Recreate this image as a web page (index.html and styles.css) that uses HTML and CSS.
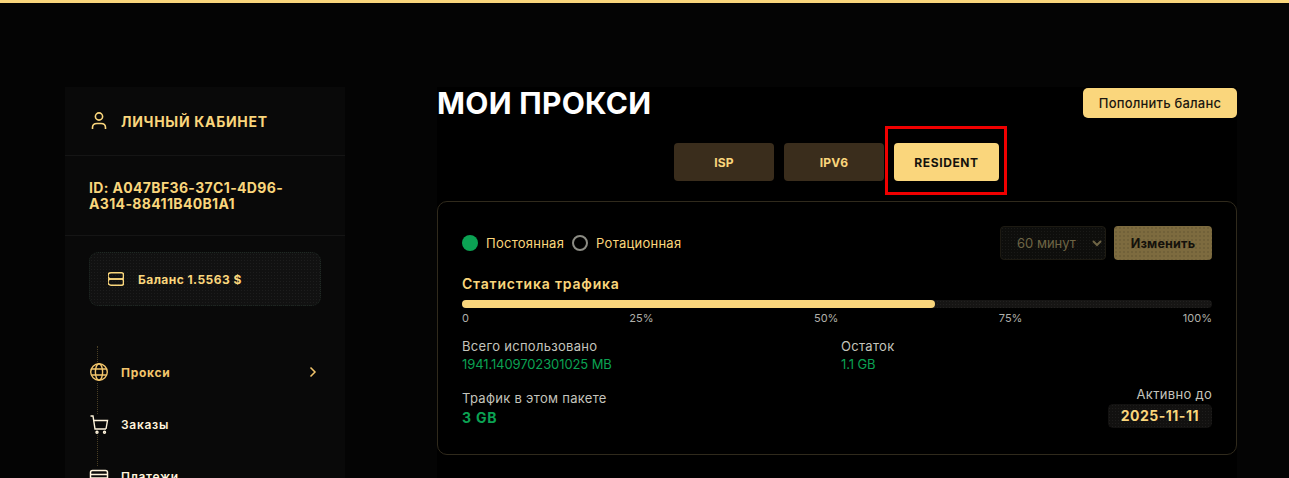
FILE: index.html
```html
<!DOCTYPE html>
<html lang="ru">
<head>
    <meta charset="UTF-8">
    <meta name="viewport" content="width=device-width, initial-scale=1.0">
    <title>Мои прокси</title>
    <link rel="stylesheet" href="styles.css">
</head>
<body>
    <div class="top-line"></div>
    <div class="page">
        <aside class="sidebar">
            <div class="side-head">
                <svg width="20" height="20" viewBox="0 0 20 20" fill="none" stroke="currentColor" stroke-width="1.6">
                    <circle cx="10" cy="5.5" r="3.6"/>
                    <path d="M3.5 18v-1.5C3.5 14 5.5 12.5 8 12.5h4c2.500 0 4.500 1.500 4.500 4V18"/>
                </svg>
                <span>ЛИЧНЫЙ КАБИНЕТ</span>
            </div>
            <div class="side-id">ID: A047BF36-37C1-4D96-A314-88411B40B1A1</div>
            <div class="side-balance-wrap">
                <div class="balance">
                    <svg width="16" height="14" viewBox="0 0 16 14" fill="none" stroke="currentColor" stroke-width="1.600">
                        <path d="M3 0.800h10.500a2 2 0 0 1 2 2V5a2 2 0 0 1-2 2H3a2 2 0 0 1 0-6.200z"/>
                        <path d="M3 7h10.500a2 2 0 0 1 2 2v2.200a2 2 0 0 1-2 2H3a2 2 0 0 1 0-6.200z"/>
                    </svg>
                    <span>Баланс 1.5563 $</span>
                </div>
            </div>
            <nav class="menu">
                <a class="menu-item active">
                    <svg width="20" height="20" viewBox="0 0 20 20" fill="none" stroke="currentColor" stroke-width="1.400">
                        <circle cx="10" cy="10" r="8.300"/>
                        <ellipse cx="10" cy="10" rx="3.600" ry="8.300"/>
                        <path d="M2.300 7h15.400M2.300 13h15.400"/>
                    </svg>
                    <span>Прокси</span>
                    <svg class="chevron" width="8" height="12" viewBox="0 0 8 12" fill="none" stroke="currentColor" stroke-width="1.500">
                        <path d="M1.500 1.500L6 6l-4.500 4.500"/>
                    </svg>
                </a>
                <a class="menu-item">
                    <svg width="20" height="20" viewBox="0 0 20 20" fill="none" stroke="currentColor" stroke-width="1.400">
                        <path d="M1.500 2H4l2 13h11"/>
                        <path d="M4.700 6.500h13.800L17 15"/>
                        <circle cx="8" cy="18.300" r="1"/>
                        <circle cx="15.500" cy="18.300" r="1"/>
                    </svg>
                    <span>Заказы</span>
                </a>
                <a class="menu-item">
                    <svg width="20" height="20" viewBox="0 0 20 20" fill="none" stroke="currentColor" stroke-width="1.500">
                        <rect x="1.500" y="4.500" width="17" height="13" rx="2"/>
                        <path d="M1.500 8.500h17M1.500 12h17"/>
                    </svg>
                    <span>Платежи</span>
                </a>
            </nav>
        </aside>

        <main class="content">
            <div class="content-head">
                <h1>МОИ ПРОКСИ</h1>
                <button class="btn-topup">Пополнить баланс</button>
            </div>
            <div class="tabs">
                <button class="tab">ISP</button>
                <button class="tab">IPV6</button>
                <button class="tab tab-active">RESIDENT<span class="highlight"></span></button>
            </div>
            <section class="card">
                <div class="card-top">
                    <div class="radios">
                        <span class="radio radio-on"></span>
                        <span class="radio-label">Постоянная</span>
                        <span class="radio"></span>
                        <span class="radio-label">Ротационная</span>
                    </div>
                    <div class="controls">
                        <select class="period" disabled>
                            <option>60 минут</option>
                        </select>
                        <button class="btn-change">Изменить</button>
                    </div>
                </div>
                <h2>Статистика трафика</h2>
                <div class="bar"><div class="bar-fill" style="width: 63%"></div></div>
                <div class="scale">
                    <span>0</span><span>25%</span><span>50%</span><span>75%</span><span>100%</span>
                </div>
                <div class="stats">
                    <div>
                        <div class="stat-label">Всего использовано</div>
                        <div class="stat-value">1941.1409702301025 MB</div>
                    </div>
                    <div>
                        <div class="stat-label">Остаток</div>
                        <div class="stat-value">1.1 GB</div>
                    </div>
                </div>
                <div class="card-bottom">
                    <div>
                        <div class="stat-label">Трафик в этом пакете</div>
                        <div class="stat-big">3 GB</div>
                    </div>
                    <div class="active-until">
                        <div class="stat-label">Активно до</div>
                        <div class="date">2025-11-11</div>
                    </div>
                </div>
            </section>
        </main>
    </div>
</body>
</html>
```

FILE: styles.css
```css
:root {
    --gold: #fad67c;
    --green: #0ba253;
    --dots: radial-gradient(rgba(255, 255, 255, 0.05) 0.5px, transparent 1px);
}

html, body {
    height: 100%;
}

body {
    margin: 0;
    background: #040404;
    color: #fff;
    font-family: Inter, "Noto Sans", sans-serif;
    overflow: hidden;
}

.top-line {
    height: 3px;
    background: var(--gold);
}

.page {
    display: flex;
    gap: 92px;
    padding: 84px 0 0 65px;
}

/* sidebar */
.sidebar {
    width: 280px;
    flex-shrink: 0;
    background: #090909;
    color: var(--gold);
    height: 500px;
}

.side-head {
    display: flex;
    align-items: center;
    gap: 12px;
    height: 68px;
    padding-left: 24px;
    border-bottom: 1px solid #151515;
    font-size: 14px;
    font-weight: 700;
    letter-spacing: 0.7px;
}

.side-id {
    height: 80px;
    box-sizing: border-box;
    padding: 24px 24px 0;
    border-bottom: 1px solid #151515;
    font-size: 14px;
    line-height: 16px;
    font-weight: 700;
    letter-spacing: 0.35px;
}

.side-balance-wrap {
    padding: 16px 24px 0;
}

.balance {
    display: flex;
    align-items: center;
    gap: 14px;
    box-sizing: border-box;
    height: 54px;
    padding-left: 18px;
    border: 1px dotted #1f2a24;
    border-radius: 9px;
    background: #111 var(--dots) 0 0 / 3px 3px;
    font-size: 12px;
    font-weight: 700;
    letter-spacing: 0.45px;
}

.menu {
    position: relative;
    margin-top: 40px;
    padding: 0 24px;
}

.menu::before {
    content: '';
    position: absolute;
    left: 32px;
    top: 0;
    bottom: 0;
    border-left: 1px dotted #4a3f24;
}

.menu-item {
    position: relative;
    display: flex;
    align-items: center;
    gap: 12px;
    height: 52px;
    padding-right: 4px;
    color: #fff4dc;
    font-size: 12px;
    font-weight: 600;
    letter-spacing: 0.7px;
}

.menu-item svg:first-child {
    background: #090909;
}

.menu-item.active {
    color: #f2c56c;
    font-weight: 700;
}

.chevron {
    margin-left: auto;
}

/* main */
.content {
    width: 800px;
    background: #000;
}

.content-head {
    display: flex;
    justify-content: space-between;
    align-items: flex-start;
    height: 31px;
}

h1 {
    margin: 1px 0 0;
    font-size: 30px;
    font-weight: 700;
    line-height: 31px;
    letter-spacing: 0.3px;
}

.btn-topup {
    width: 154px;
    height: 30px;
    margin-top: 1px;
    border: none;
    border-radius: 5px;
    background: var(--gold);
    color: #1b1710;
    font: 500 13px Inter, sans-serif;
    letter-spacing: 0.2px;
}

.tabs {
    display: flex;
    justify-content: center;
    gap: 10px;
    margin-top: 25px;
    padding-right: 1px;
}

.tab {
    position: relative;
    width: 100px;
    height: 38px;
    border: none;
    border-radius: 4px;
    background: #3a2d1c;
    color: var(--gold);
    font: 700 12px Inter, sans-serif;
    letter-spacing: 0.2px;
}

.tab-active {
    width: 105px;
    background: var(--gold);
    color: #15120c;
    letter-spacing: 0.6px;
}

.highlight {
    position: absolute;
    left: -9px;
    top: -17px;
    width: 116px;
    height: 63px;
    border: 3px solid #f00000;
}

.card {
    box-sizing: border-box;
    height: 254px;
    margin-top: 20px;
    padding: 24px;
    border: 1px solid #302a1c;
    border-radius: 10px;
}

.card-top {
    display: flex;
    justify-content: space-between;
    align-items: center;
    height: 34px;
}

.radios {
    display: flex;
    align-items: center;
    font-size: 13px;
    color: var(--gold);
    letter-spacing: 0.25px;
}

.radio {
    box-sizing: border-box;
    width: 16px;
    height: 16px;
    margin-right: 8px;
    border: 2px solid #8c8c84;
    border-radius: 50%;
}

.radio-on {
    border: none;
    background: var(--green);
}

.radio-label {
    margin-right: 8px;
}

.controls {
    display: flex;
    gap: 8px;
}

.period {
    width: 106px;
    height: 34px;
    padding-left: 12px;
    border: 1px solid #1d1a12;
    border-radius: 4px;
    background: #0e0e0c var(--dots) 0 0 / 3px 3px;
    color: #6f6545;
    opacity: 1;
    font: 400 13px Inter, sans-serif;
}

.btn-change {
    width: 98px;
    height: 34px;
    border: none;
    border-radius: 4px;
    background: #7d6b3f radial-gradient(rgba(0, 0, 0, 0.16) 0.5px, transparent 1px) 0 0 / 4px 4px;
    color: #14110b;
    font: 700 12.5px Inter, sans-serif;
    letter-spacing: 0.2px;
}

h2 {
    margin: 15px 0 0;
    color: var(--gold);
    font-size: 14px;
    line-height: 17px;
    font-weight: 600;
    letter-spacing: 0.8px;
}

.bar {
    height: 8px;
    margin-top: 8px;
    border-radius: 4px;
    background: #161514 var(--dots) 0 0 / 3px 3px;
}

.bar-fill {
    height: 100%;
    border-radius: 4px;
    background: var(--gold);
}

.scale {
    display: flex;
    justify-content: space-between;
    margin-top: 4px;
    color: #b0b0aa;
    font-size: 11px;
    line-height: 13px;
}

.stats {
    display: flex;
    margin-top: 12px;
}

.stats > div:first-child {
    width: 379px;
}

.stat-label {
    color: #c4c4bc;
    font-size: 13px;
    line-height: 18px;
    letter-spacing: 0.3px;
}

.stat-value {
    color: var(--green);
    font-size: 13px;
    line-height: 18px;
    letter-spacing: -0.1px;
}

.card-bottom {
    display: flex;
    justify-content: space-between;
    align-items: flex-end;
    margin-top: 12px;
}

.stat-big {
    margin-top: 1px;
    color: var(--green);
    font-size: 14px;
    line-height: 20px;
    font-weight: 700;
    letter-spacing: 0.8px;
}

.active-until {
    text-align: right;
}

.date {
    margin-top: 1px;
    padding: 0 13px;
    height: 24px;
    border-radius: 5px;
    background: #121110 var(--dots) 0 0 / 3px 3px;
    color: var(--gold);
    font-size: 14px;
    line-height: 24px;
    font-weight: 700;
    letter-spacing: 0.5px;
}
```
